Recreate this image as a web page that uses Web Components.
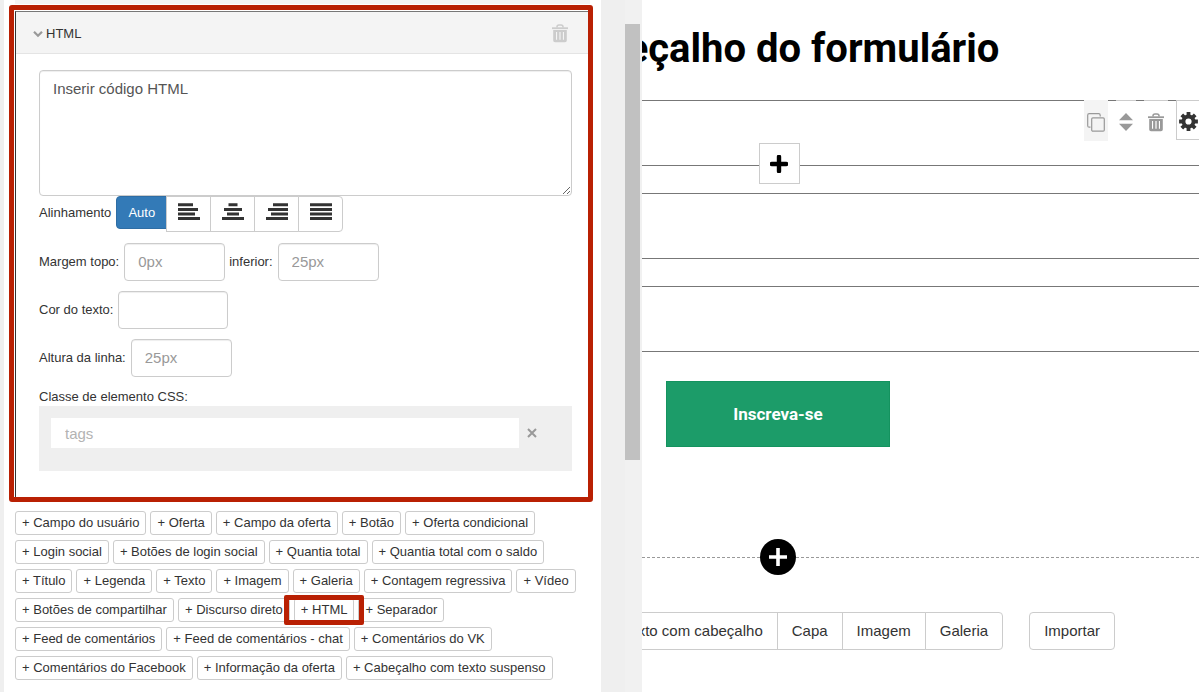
<!DOCTYPE html>
<html lang="pt">
<head>
<meta charset="utf-8">
<meta name="viewport" content="width=device-width, initial-scale=1">
<title>Editor de formulário</title>
<style>
  body { margin: 0; background: #fff; color: #333; font: 13px/18px "Liberation Sans", Arial, sans-serif; }
</style>
</head>
<body>
<form-builder>
  <editor-sidebar slot="sidebar">
    <html-settings slot="panel"></html-settings>
    <add-button>Campo do usuário</add-button>
    <add-button>Oferta</add-button>
    <add-button>Campo da oferta</add-button>
    <add-button>Botão</add-button>
    <add-button>Oferta condicional</add-button>
    <add-button>Login social</add-button>
    <add-button>Botões de login social</add-button>
    <add-button>Quantia total</add-button>
    <add-button>Quantia total com o saldo</add-button>
    <add-button>Título</add-button>
    <add-button>Legenda</add-button>
    <add-button>Texto</add-button>
    <add-button>Imagem</add-button>
    <add-button>Galeria</add-button>
    <add-button>Contagem regressiva</add-button>
    <add-button>Vídeo</add-button>
    <add-button>Botões de compartilhar</add-button>
    <add-button>Discurso direto</add-button>
    <add-button marked>HTML</add-button>
    <add-button>Separador</add-button>
    <add-button>Feed de comentários</add-button>
    <add-button>Feed de comentários - chat</add-button>
    <add-button>Comentários do VK</add-button>
    <add-button>Comentários do Facebook</add-button>
    <add-button>Informação da oferta</add-button>
    <add-button>Cabeçalho com texto suspenso</add-button>
  </editor-sidebar>
  <form-preview slot="preview">
    <span slot="title">Cabeçalho do formulário</span>
    <preview-block><block-tools></block-tools></preview-block>
    <preview-block></preview-block>
    <preview-block></preview-block>
    <span slot="submit">Inscreva-se</span>
    <section-picker slot="picker"></section-picker>
  </form-preview>
</form-builder>

<script>
const ICONS = {
  chevron: '<svg width="10" height="8" viewBox="0 0 10 8"><path d="M1 1.8 5 5.8 9 1.8" fill="none" stroke="currentColor" stroke-width="2.2"/></svg>',
  trash: '<svg width="16" height="19" viewBox="0 0 16 19" fill="none" stroke="currentColor"><path d="M5 3.6V2.8Q5 1 7 1H9Q11 1 11 2.8V3.6" stroke-width="1.5"/><path d="M0 4.2H16" stroke-width="1.8"/><path d="M1.2 6H14.8V16.5Q14.8 18.3 13 18.3H3Q1.2 18.3 1.2 16.5ZM4 8V15.8H5.1V8ZM7.4 8V15.8H8.6V8ZM10.9 8V15.8H12V8Z" fill="currentColor" fill-rule="evenodd" stroke="none"/></svg>',
  left: '<svg width="22" height="18" viewBox="0 0 22 18" stroke="currentColor" stroke-width="3"><path d="M0 1.8H15M0 6.4H20M0 10.9H17M0 15.5H22"/></svg>',
  center: '<svg width="22" height="18" viewBox="0 0 22 18" stroke="currentColor" stroke-width="3"><path d="M6.5 1.8H15.5M2 6.4H20M5 10.9H17M0 15.5H22"/></svg>',
  right: '<svg width="22" height="18" viewBox="0 0 22 18" stroke="currentColor" stroke-width="3"><path d="M7 1.8H22M2 6.4H22M5 10.9H22M0 15.5H22"/></svg>',
  justify: '<svg width="22" height="18" viewBox="0 0 22 18" stroke="currentColor" stroke-width="3"><path d="M0 1.8H22M0 6.4H22M0 10.9H22M0 15.5H22"/></svg>',
  close: '<svg width="10" height="10" viewBox="0 0 10 10"><path d="M1 1 9 9M9 1 1 9" fill="none" stroke="currentColor" stroke-width="2"/></svg>',
  copy: '<svg width="18" height="19" viewBox="0 0 18 19" fill="none" stroke="currentColor" stroke-width="1.2"><path d="M3.5 14.2H2.2Q.7 14.2 .7 12.7V2.2Q.7 .7 2.2 .7H11.7Q13.2 .7 13.2 2.2V3.5"/><rect x="4.7" y="4.9" width="12.6" height="13.2" rx="1.2"/></svg>',
  sort: '<svg width="14" height="18" viewBox="0 0 14 18" fill="currentColor"><path d="M0 7.2 7 0 14 7.2ZM0 10.8 7 18 14 10.8Z"/></svg>',
  plus: '<svg width="18" height="18" viewBox="0 0 18 18"><path d="M9 1.8V16.2M1.8 9H16.2" fill="none" stroke="currentColor" stroke-width="4.4" stroke-linecap="round"/></svg>',
  thinPlus: '<svg width="18" height="18" viewBox="0 0 18 18"><path d="M9 0V18M0 9H18" fill="none" stroke="currentColor" stroke-width="3.6"/></svg>',
  gear: '<svg width="19" height="19" viewBox="-9.5 -9.5 19 19"><circle r="5" fill="none" stroke="currentColor" stroke-width="3.8"/><path d="M0-9.4V-6M0 9.4V6M-9.4 0H-6M9.4 0H6M-6.7-6.7-4-4M6.7-6.7 4-4M-6.7 6.7-4 4M6.7 6.7 4 4" stroke="currentColor" stroke-width="3.8"/></svg>'
};

const RESET = `
  :host, * { box-sizing: border-box; }
  button, input, textarea { font: inherit; color: inherit; margin: 0; }
  button { cursor: pointer; }
  svg { display: block; }
`;

function define(name, css, html) {
  customElements.define(name, class extends HTMLElement {
    constructor() {
      super();
      this.attachShadow({ mode: 'open' }).innerHTML = `<style>${RESET}${css}</style>${typeof html === 'function' ? html(this) : html}`;
    }
  });
}

define('ui-icon', `:host { display: inline-flex; flex: none; }`, el => ICONS[el.getAttribute('name')]);

define('form-builder', `
  :host { display: grid; grid-template-columns: minmax(0, 642fr) minmax(0, 557fr); min-height: 100vh; overflow: hidden; }
`, `<slot name="sidebar"></slot><slot name="preview"></slot>`);

define('editor-sidebar', `
  :host { display: grid; grid-template-columns: minmax(0, 1fr) 24px 17px; padding-left: 4px; background: #efefef; }
  .sheet { background: #fff; padding: 0 8px 10px 5px; }
  .previous { height: 5px; margin: 0 3px 0 6px; background: #f4f4f4; border-bottom: 1px solid #fff; }
  .add { display: flex; flex-wrap: wrap; gap: 5px 4px; margin: 9px 0 0 6px; }
  .track { grid-column: 3; background: #f1f1f1; padding: 24px 2px 0 0; }
  .thumb { height: 63vh; background: #c1c1c1; }
`, `
  <div class="sheet">
    <div class="previous"></div>
    <slot name="panel"></slot>
    <div class="add"><slot></slot></div>
  </div>
  <div class="track"><div class="thumb"></div></div>
`);

define('add-button', `
  :host { display: block; position: relative; }
  button { display: block; height: 24px; padding: 0 6px; border: 1px solid #ccc; border-radius: 3px; background: #fff; line-height: 20px; white-space: nowrap; }
  :host([marked]) { z-index: 1; }
  :host([marked])::after { content: ""; position: absolute; inset: -3px -10px; border: 5px solid #b92003; border-radius: 2px; pointer-events: none; }
`, `<button type="button">+ <slot></slot></button>`);

define('html-settings', `
  :host { display: block; border: 5px solid #b92003; border-radius: 3px; }
  .card { margin: 1px 0 0 1px; border-left: 1px solid #333; border-top: 1px solid #777; }
  header { display: flex; align-items: center; height: 42px; padding: 2px 20px 0 17px; background: #f4f4f4; border-bottom: 1px solid #e4e4e4; }
  .toggle { display: flex; align-items: center; gap: 3px; padding: 0; border: 0; background: none; }
  .toggle ui-icon { color: #999; }
  .remove { display: flex; margin-left: auto; padding: 0; border: 0; background: none; color: #ccc; }
  .body { padding: 16px 16px 26px 23px; }
  textarea { display: block; width: 100%; height: 126px; padding: 8px 13px; border: 1px solid #ccc; border-radius: 4px; background: #fff; font-size: 15px; line-height: 20px; box-shadow: inset 0 1px 1px rgba(0,0,0,.07); }
  textarea::placeholder { color: #555; opacity: 1; }
  .rows { display: grid; gap: 10px; }
  .row { display: flex; align-items: center; gap: 4px; }
  .css { display: block; margin-top: 11px; }
  .tags { display: flex; align-items: flex-start; gap: 8px; height: 65px; padding: 12px 35px 0 12px; background: #efefef; }
  .tags input { flex: 1; min-width: 0; height: 30px; padding: 0 14px; border: 0; background: #fff; font-size: 15px; }
  .tags input::placeholder { color: #b3b3b3; opacity: 1; }
  .tags button { display: flex; align-items: center; height: 30px; padding: 0; border: 0; background: none; color: #999; }
`, `
  <div class="card">
    <header>
      <button class="toggle" type="button"><ui-icon name="chevron"></ui-icon>HTML</button>
      <button class="remove" type="button" aria-label="Excluir"><ui-icon name="trash"></ui-icon></button>
    </header>
    <div class="body">
      <textarea aria-label="Código HTML" placeholder="Inserir código HTML"></textarea>
      <div class="rows">
        <align-picker></align-picker>
        <div class="row"><px-field label="Margem topo:" hint="0px"></px-field><px-field label="inferior:" hint="25px"></px-field></div>
        <div class="row"><px-field label="Cor do texto:" wide></px-field></div>
        <div class="row"><px-field label="Altura da linha:" hint="25px"></px-field></div>
      </div>
      <label class="css" for="tags">Classe de elemento CSS:</label>
      <div class="tags"><input id="tags" type="text" placeholder="tags"><button type="button" aria-label="Limpar"><ui-icon name="close"></ui-icon></button></div>
    </div>
  </div>
`);

define('align-picker', `
  :host { display: flex; align-items: flex-start; gap: 5px; height: 37px; }
  .label { line-height: 34px; }
  .group { display: flex; align-items: flex-start; }
  button { display: flex; align-items: center; justify-content: center; width: 45px; height: 36px; margin-left: -1px; padding: 0 0 4px; border: 1px solid #ccc; background: #fff; color: #333; }
  .auto { width: 51px; height: 33px; margin: 0; padding: 0; border-color: #2e6da4; border-radius: 4px 0 0 4px; background: #337ab7; color: #fff; }
  button:last-child { border-radius: 0 4px 4px 0; }
`, `
  <span class="label" id="l">Alinhamento</span>
  <div class="group" role="group" aria-labelledby="l">
    <button class="auto" type="button">Auto</button>
    <button type="button" aria-label="Esquerda"><ui-icon name="left"></ui-icon></button>
    <button type="button" aria-label="Centro"><ui-icon name="center"></ui-icon></button>
    <button type="button" aria-label="Direita"><ui-icon name="right"></ui-icon></button>
    <button type="button" aria-label="Justificado"><ui-icon name="justify"></ui-icon></button>
  </div>
`);

define('px-field', `
  :host { display: flex; align-items: center; gap: 5px; }
  input { width: 101px; height: 38px; padding: 0 13px 2px; border: 1px solid #ccc; border-radius: 4px; background: #fff; font-size: 15px; box-shadow: inset 0 1px 1px rgba(0,0,0,.07); }
  :host([wide]) input { width: 110px; }
  input::placeholder { color: #999; opacity: 1; }
`, el => `<label for="f">${el.getAttribute('label')}</label><input id="f" type="text" placeholder="${el.getAttribute('hint') || ''}">`);

define('form-preview', `
  :host { display: block; overflow: hidden; background: #fff; }
  /* The canvas continues to the left, under the sidebar. */
  .canvas { position: relative; margin-left: -285px; }
  h1 { margin: 0; padding: 25px 0 27px; font: 700 40px/48px Roboto, sans-serif; color: #000; text-align: center; white-space: nowrap; }
  .blocks { display: grid; gap: 27px; }
  .submit { display: block; width: 224px; height: 66px; margin: 29px auto 0; border: 1px solid #14935f; background: #1c9c69; color: #fff; font: 700 17px/24px Roboto, sans-serif; }
  .divider { display: flex; align-items: center; margin-top: 92px; }
  .divider::before, .divider::after { content: ""; flex: 1; border-top: 1px dashed #999; }
  .divider button { display: grid; place-items: center; width: 36px; height: 36px; padding: 0; border: 0; border-radius: 50%; background: #000; color: #fff; }
`, `
  <div class="canvas">
    <h1><slot name="title"></slot></h1>
    <div class="blocks"><slot></slot></div>
    <button class="submit" type="button"><slot name="submit"></slot></button>
    <div class="divider"><button type="button" aria-label="Adicionar seção"><ui-icon name="thinPlus"></ui-icon></button></div>
    <slot name="picker"></slot>
  </div>
`);

define('preview-block', `
  :host { display: block; position: relative; height: 66px; border: 1px solid #777; border-right: 0; }
`, `<slot></slot>`);

define('block-tools', `
  button { display: grid; place-items: center; padding: 0; border: 0; background: #fff; color: #999; }
  .tools { position: absolute; top: -1px; right: 0; display: flex; gap: 8px; }
  .tools button { width: 24px; height: 41px; padding-top: 2px; border-top: 1px solid #ccc; }
  .tools .copy { background: #f4f4f4; border-color: #f4f4f4; }
  .tools .sort { width: 20px; }
  .tools .gear { width: 23px; height: 40px; border: 1px solid #ccc; border-right: 0; color: #333; }
  .insert { position: absolute; left: 50%; bottom: -19px; width: 41px; height: 41px; margin-left: -20px; border: 1px solid #ccc; color: #000; }
`, `
  <div class="tools">
    <button class="copy" type="button" aria-label="Duplicar"><ui-icon name="copy"></ui-icon></button>
    <button class="sort" type="button" aria-label="Mover"><ui-icon name="sort"></ui-icon></button>
    <button type="button" aria-label="Excluir"><ui-icon name="trash"></ui-icon></button>
    <button class="gear" type="button" aria-label="Configurar"><ui-icon name="gear"></ui-icon></button>
  </div>
  <button class="insert" type="button" aria-label="Inserir"><ui-icon name="plus"></ui-icon></button>
`);

define('section-picker', `
  :host { display: flex; justify-content: flex-end; gap: 26px; margin: 37px 84px 0 0; }
  .group { display: flex; }
  button { height: 38px; margin-left: -1px; padding: 0 14px; border: 1px solid #ccc; background: #fff; font-size: 15px; line-height: 20px; white-space: nowrap; }
  button:first-child { border-radius: 4px 0 0 4px; }
  button:last-child { border-radius: 0 4px 4px 0; }
  .import { margin: 0; }
  button.import { border-radius: 4px; }
`, `
  <div class="group">
    <button type="button">Texto com cabeçalho</button>
    <button type="button">Capa</button>
    <button type="button">Imagem</button>
    <button type="button">Galeria</button>
  </div>
  <button class="import" type="button">Importar</button>
`);
</script>
</body>
</html>
